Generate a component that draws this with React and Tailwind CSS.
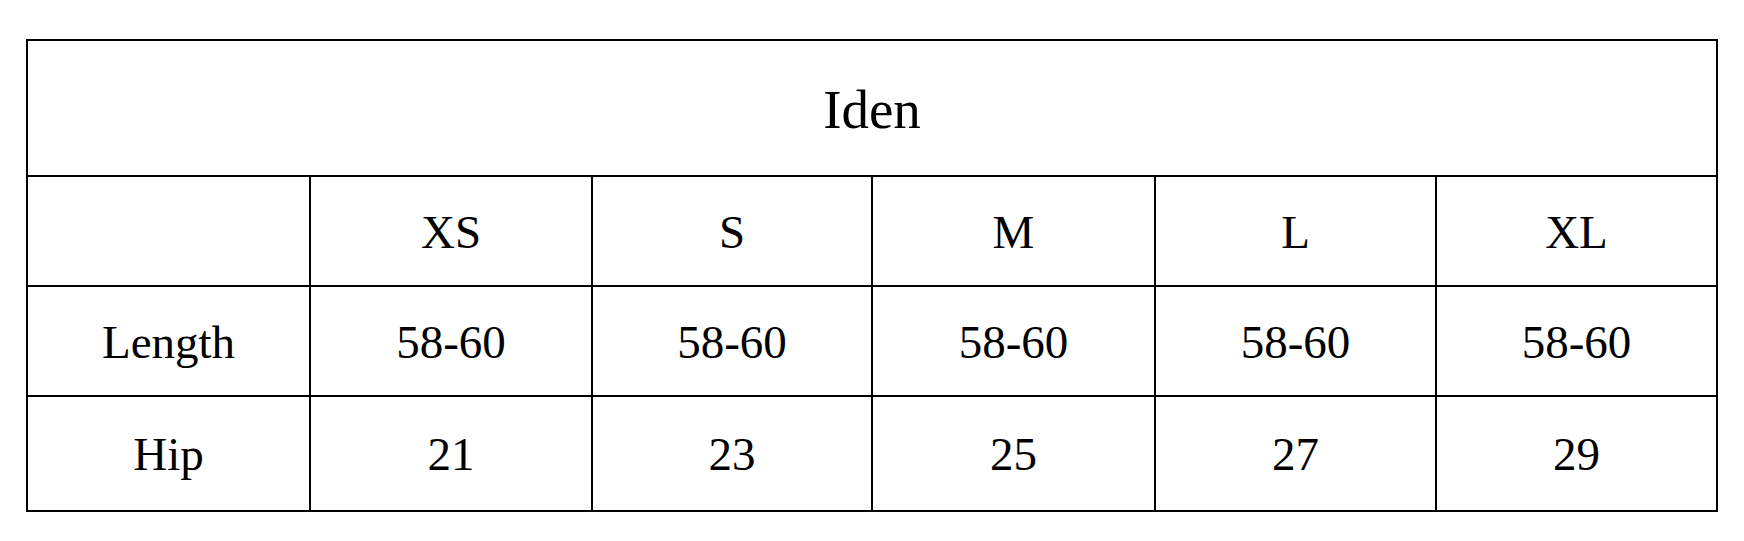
import React from "react";

const sizes = ["XS", "S", "M", "L", "XL"];
const rows = [
  { label: "Length", values: ["58-60", "58-60", "58-60", "58-60", "58-60"], h: "h-[110px] border-b-2" },
  { label: "Hip", values: ["21", "23", "25", "27", "29"], h: "h-[113px]" },
];

function Cell({ children, last }) {
  return (
    <div
      className={
        "flex items-center justify-center pt-[2px] text-[47px] text-black " +
        (last ? "" : "border-r-2 border-black")
      }
    >
      {children}
    </div>
  );
}

const gridCols = "grid grid-cols-[283px_282px_280px_283px_281px_279px] border-black";

export default function App() {
  return (
    <div
      className="w-[1744px] h-[541px] bg-white pt-[39px] pl-[26px]"
      style={{ fontFamily: '"Liberation Serif", "Times New Roman", serif' }}
    >
      <div className="w-[1692px] border-2 border-black">
        <div className="h-[136px] border-b-2 border-black flex items-center justify-center pt-[4px] text-[55px] text-black">
          Iden
        </div>
        <div className={gridCols + " h-[110px] border-b-2"}>
          <Cell />
          {sizes.map((s, i) => (
            <Cell key={s} last={i === sizes.length - 1}>
              {s}
            </Cell>
          ))}
        </div>
        {rows.map((r) => (
          <div key={r.label} className={gridCols + " " + r.h}>
            <Cell>{r.label}</Cell>
            {r.values.map((v, i) => (
              <Cell key={i} last={i === r.values.length - 1}>
                {v}
              </Cell>
            ))}
          </div>
        ))}
      </div>
    </div>
  );
}
